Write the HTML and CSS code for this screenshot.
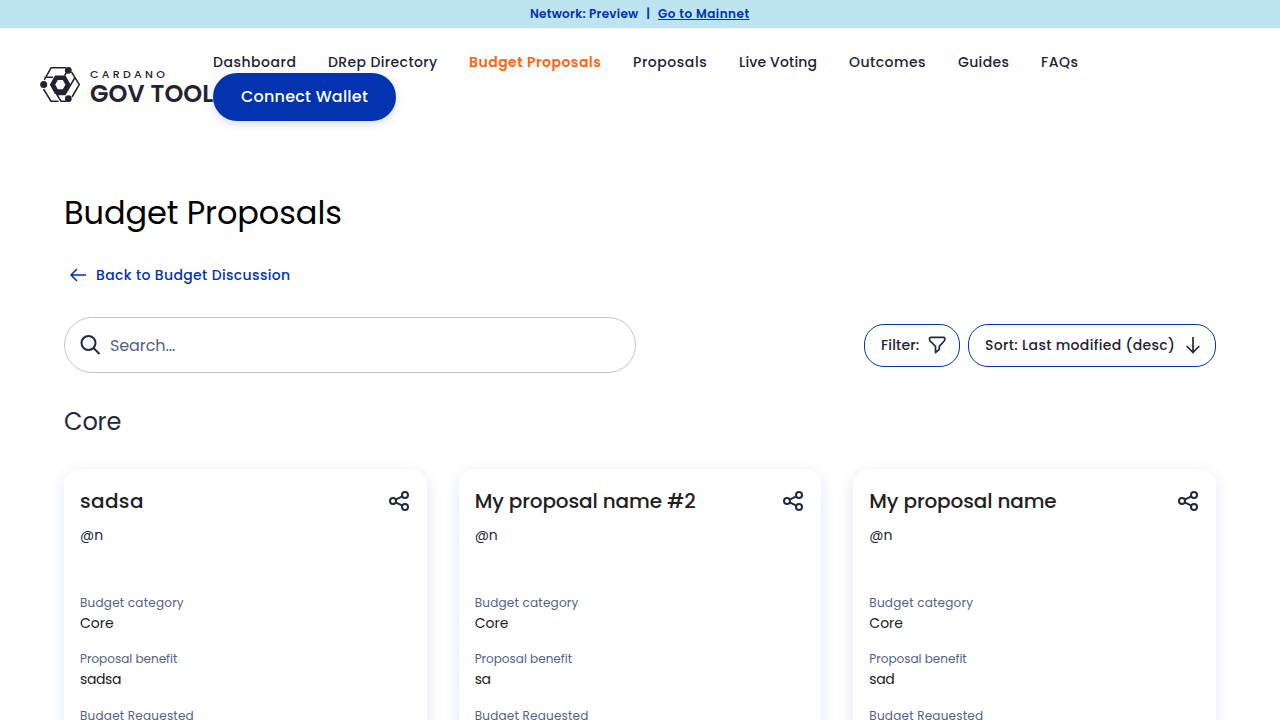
FILE: index.html
```html
<!DOCTYPE html>
<html lang="en">
<head>
<meta charset="utf-8">
<title>Budget Proposals</title>
<link rel="stylesheet" href="styles.css">
</head>
<body>
<svg class="sprite" aria-hidden="true">
  <symbol id="share" viewBox="0 0 24 24"><g fill="none" stroke="#212a3d" stroke-width="2"><circle cx="5" cy="12" r="3"/><circle cx="17" cy="6" r="3"/><circle cx="17" cy="18" r="3"/><path d="M7.700 10.700l6.600-3.300M7.700 13.300l6.600 3.300"/></g></symbol>
</svg>
<div class="network"><span class="preview">Network: Preview</span><span class="bar">|</span><a class="mainnet">Go to Mainnet</a></div>
<header class="header">
  <svg class="logo" width="184" height="40" viewBox="0 0 184 40">
    <g fill="none" stroke="#242232" stroke-width="1.500">
      <path d="M4.300 15L11 2.800H26M31.500 7l7.800 12.500L32 32M26 36.200H21L16.500 29M18.500 36.200H11L3.500 24M4.500 12.200H13M24.500 10.500l4-6M35 12.500L25 29.500H16.500"/>
    </g>
    <path fill="#242232" fill-rule="evenodd" d="M15 10.500h10.500l5.200 9.200-5.200 9.200H15l-5.200-9.200zM17.800 15l-2.600 4.700 2.600 4.600h5l2.600-4.600-2.600-4.700z"/>
    <g fill="#242232"><circle cx="28.300" cy="5.300" r="3.400"/><circle cx="3.700" cy="19.500" r="3.500"/><circle cx="28.300" cy="33.700" r="3.400"/></g>
    <text class="logo-small" x="50" y="13">CARDANO</text>
    <text class="logo-big" x="50" y="37">GOV TOOLS</text>
  </svg>
  <div class="menu">
    <nav class="nav">
      <a class="n1">Dashboard</a><a class="n2">DRep Directory</a><a class="n3 active">Budget Proposals</a><a class="n4">Proposals</a><a class="n5">Live Voting</a><a class="n6">Outcomes</a><a class="n7">Guides</a><a class="n8">FAQs</a>
    </nav>
    <button class="connect">Connect Wallet</button>
  </div>
</header>
<main class="main">
  <h1 class="title">Budget Proposals</h1>
  <a class="back"><svg width="18" height="16" viewBox="0 0 18 16"><path d="M17 8H2M8 2L2 8l6 6" fill="none" stroke="#0033ad" stroke-width="1.500"/></svg><span>Back to Budget Discussion</span></a>
  <div class="tools">
    <div class="search"><svg width="22" height="22" viewBox="0 0 22 22"><g fill="none" stroke="#212a3d" stroke-width="2"><circle cx="8.500" cy="9" r="7"/><path d="M13.500 14l6 6"/></g></svg><span>Search...</span></div>
    <div class="pill filter"><span>Filter:</span><svg width="20" height="18" viewBox="0 0 20 18"><path d="M4 1.300h12.500q1.300 0 1.300 1.300v1q0 .8-.6 1.400l-4.900 5.400v3L8.500 16.500v-6.100L3.200 5Q2.500 4.400 2.500 3.600v-1Q2.500 1.300 4 1.300z" fill="none" stroke="#212a3d" stroke-width="1.700" stroke-linejoin="round"/></svg></div>
    <div class="pill sort"><span>Sort: Last modified (desc)</span><svg width="14" height="18" viewBox="0 0 14 18"><path d="M7 1v15.500M.7 10L7 16.500 13.300 10" fill="none" stroke="#212a3d" stroke-width="1.700"/></svg></div>
  </div>
  <h2 class="section">Core</h2>
  <div class="cards">
    <article class="card"><div class="head"><h3 class="t1">sadsa</h3><svg class="share"><use href="#share"/></svg></div><p class="user">@n</p>
      <p class="label c1">Budget category</p><p class="value">Core</p><p class="label c2">Proposal benefit</p><p class="value v2">sadsa</p><p class="label c3">Budget Requested</p></article>
    <article class="card"><div class="head"><h3 class="t2">My proposal name #2</h3><svg class="share"><use href="#share"/></svg></div><p class="user">@n</p>
      <p class="label c1">Budget category</p><p class="value">Core</p><p class="label c2">Proposal benefit</p><p class="value v2">sa</p><p class="label c3">Budget Requested</p></article>
    <article class="card"><div class="head"><h3 class="t2">My proposal name</h3><svg class="share"><use href="#share"/></svg></div><p class="user">@n</p>
      <p class="label c1">Budget category</p><p class="value">Core</p><p class="label c2">Proposal benefit</p><p class="value v2">sad</p><p class="label c3">Budget Requested</p></article>
  </div>
</main>
</body>
</html>
```
FILE: styles.css
```css
* { box-sizing: border-box; }
body { margin: 0; height: 720px; overflow: hidden; background: #fff; color: #212a3d; font-family: Poppins, Inter, sans-serif; }
h1, h2, h3, p { margin: 0; }
.sprite { display: none; }
.network { height: 28px; background: #bce4f1; color: #0033ad; display: flex; align-items: center; padding-left: 530px; font-size: 12px; font-weight: 600; white-space: nowrap; }
.preview { width: 108px; letter-spacing: .27px; }
.network .bar { width: 20px; text-align: center; }
.mainnet { letter-spacing: .5px; text-decoration: underline; text-decoration-thickness: 1px; text-underline-offset: 1px; }
.header { height: 113px; padding: 24px 40px; display: flex; }
.logo { flex: none; margin: 13px -11px 0 0; }
.logo text { fill: #242232; }
.logo-small { font-size: 11px; font-weight: 500; letter-spacing: 3.300px; }
.logo-big { font-size: 24px; font-weight: 600; letter-spacing: .1px; }
.menu { position: relative; }
.nav { display: flex; gap: 32px; height: 21px; line-height: 21px; font-size: 14px; font-weight: 500; color: #242232; white-space: nowrap; letter-spacing: .47px; }
.nav a { flex: none; }
.n1 { width: 83px; letter-spacing: .52px; }
.n2 { width: 109px; letter-spacing: .38px; }
.n3 { width: 132px; }
.n4 { width: 74px; letter-spacing: .55px; }
.n5 { width: 78px; letter-spacing: .17px; }
.n6 { width: 77px; }
.n7 { width: 51px; letter-spacing: .35px; }
.n8 { width: 38px; }
.nav .active { color: #ff640a; font-weight: 600; }
.connect { width: 183px; height: 48px; border: 0; border-radius: 24px; padding: 0 0 2px; background: #0033ad; color: #fff; font: 500 16px Poppins, Inter, sans-serif; letter-spacing: .22px; box-shadow: 0 3px 10px rgba(0, 51, 173, .17); display: block; }
.main { padding: 48px 64px 0; }
.title { font-size: 32px; line-height: 48px; font-weight: 400; color: #000; white-space: nowrap; letter-spacing: -.1px; }
.back { display: flex; align-items: center; gap: 9px; height: 24px; margin-top: 26px; padding-left: 5px; color: #0033ad; font-size: 14px; font-weight: 500; letter-spacing: .36px; }
.tools { display: flex; align-items: center; margin-top: 30px; height: 56px; }
.search { width: 572px; height: 56px; border: 1px solid #c4c4c4; border-radius: 28px; margin-right: auto; display: flex; align-items: center; gap: 8px; padding-left: 15px; color: #506288; font-size: 16px; letter-spacing: -.1px; }
.pill { height: 43px; border: 1px solid #0033ad; border-radius: 20px; display: flex; align-items: center; justify-content: space-between; padding-left: 16px; color: #242232; font-size: 14px; font-weight: 500; white-space: nowrap; letter-spacing: .33px; }
.filter { width: 96px; padding-right: 12px; margin-right: 8px; letter-spacing: .15px; }
.sort { width: 248px; padding-right: 15px; }
.section { margin-top: 31px; font-size: 24px; line-height: 36px; font-weight: 400; letter-spacing: -.15px; }
.cards { display: grid; grid-template-columns: repeat(3, 1fr); gap: 32px; margin-top: 29px; }
.card { height: 400px; border-radius: 16px; padding: 16px; background: #fff; box-shadow: 0 4px 15px rgba(47, 78, 220, .14); }
.head { display: flex; justify-content: space-between; align-items: center; height: 32px; }
.head h3 { font-size: 20px; font-weight: 500; color: #212121; white-space: nowrap; }
.head .t1 { letter-spacing: .35px; }
.head .t2 { letter-spacing: -.12px; }
.share { width: 24px; height: 24px; margin-right: -1px; }
.user { font-size: 14px; line-height: 20px; margin: 8px 0 49px; }
.label { font-size: 12px; line-height: 18px; color: #506288; }
.c1, .c3 { letter-spacing: .22px; }
.value { font-size: 14px; line-height: 20px; margin: 1px 0 17px; color: #212121; }
.v2 { margin-bottom: 18px; letter-spacing: -.4px; }
```
